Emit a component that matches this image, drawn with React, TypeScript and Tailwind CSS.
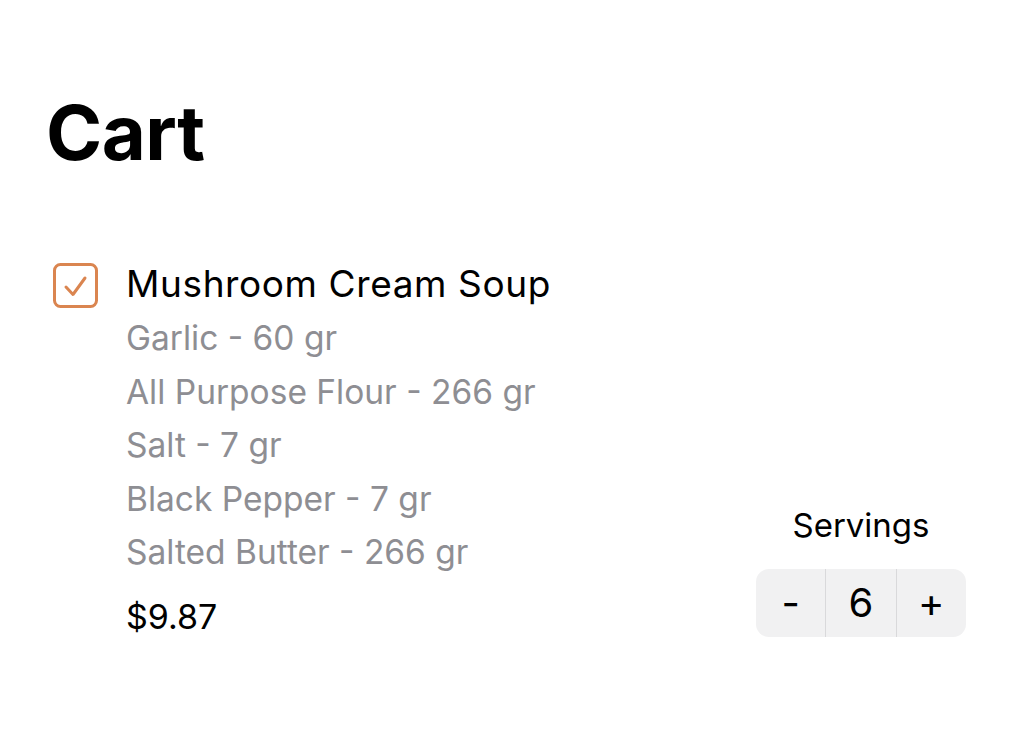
import { useState } from 'react'

const ingredients = [
  'Garlic - 60 gr',
  'All Purpose Flour - 266 gr',
  'Salt - 7 gr',
  'Black Pepper - 7 gr',
  'Salted Butter - 266 gr',
]

export default function App() {
  const [checked, setChecked] = useState(true)
  const [servings, setServings] = useState(6)

  return (
    <div className="min-h-screen bg-white font-['Inter','Liberation_Sans',sans-serif] text-black">
      <div className="pt-[94px] pl-[46px] pr-[58px]">
        <h1 className="text-[76px] font-bold leading-none tracking-[-0.5px]">Cart</h1>

        <div className="mt-[92px] pl-[7px] flex items-end justify-between">
          <div className="flex gap-[28px]">
            <button onClick={() => setChecked(!checked)} className="mt-[1px] w-[45px] h-[45px] shrink-0">
              <svg width="45" height="45" viewBox="0 0 45 45" fill="none">
                <rect x="1.5" y="1.5" width="42" height="42" rx="6" stroke="#da8550" strokeWidth="3" />
                {checked && (
                  <path
                    d="M13 24 L20 31.5 L32 15"
                    stroke="#da8550"
                    strokeWidth="3"
                    strokeLinecap="round"
                    strokeLinejoin="round"
                  />
                )}
              </svg>
            </button>

            <div>
              <h2 className="text-[37px] leading-[44px] tracking-[0.6px]">Mushroom Cream Soup</h2>
              <div className="mt-[6px]">
                {ingredients.map((item, i) => (
                  <p key={i} className="text-[33.5px] leading-[53.5px] text-[#8e8e93]">
                    {item}
                  </p>
                ))}
              </div>
              <p className="mt-[17px] text-[34px] leading-[40px]">$9.87</p>
            </div>
          </div>

          <div className="flex flex-col items-center">
            <p className="text-[33px] leading-[40px]">Servings</p>
            <div className="mt-[24px] flex h-[68px] w-[210px] rounded-[13px] bg-[#f1f1f2] text-[40px]">
              <button
                onClick={() => setServings(Math.max(1, servings - 1))}
                className="flex-1 flex items-center justify-center"
              >
                -
              </button>
              <div className="flex-1 flex items-center justify-center border-x border-[#d9d9db]">
                {servings}
              </div>
              <button
                onClick={() => setServings(servings + 1)}
                className="flex-1 flex items-center justify-center"
              >
                +
              </button>
            </div>
          </div>
        </div>
      </div>
    </div>
  )
}
